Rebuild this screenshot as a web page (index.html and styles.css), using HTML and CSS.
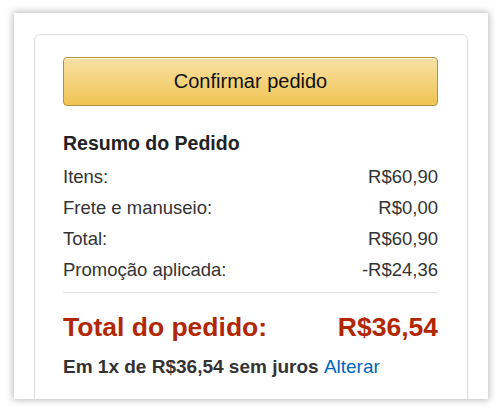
FILE: index.html
```html
<!DOCTYPE html>
<html lang="pt-BR">
<head>
<meta charset="utf-8">
<title>Resumo do Pedido</title>
<link rel="stylesheet" href="styles.css">
</head>
<body>
<div class="frame">
  <div class="card">
    <button class="confirm">Confirmar pedido</button>
    <h3 class="heading">Resumo do Pedido</h3>
    <div class="rows">
      <div class="row"><span>Itens:</span><span>R$60,90</span></div>
      <div class="row"><span>Frete e manuseio:</span><span>R$0,00</span></div>
      <div class="row"><span>Total:</span><span>R$60,90</span></div>
      <div class="row"><span>Promoção aplicada:</span><span>-R$24,36</span></div>
    </div>
    <div class="total"><span>Total do pedido:</span><span>R$36,54</span></div>
    <div class="installments">Em 1x de R$36,54 sem juros <a class="link" href="#">Alterar</a></div>
  </div>
</div>
</body>
</html>
```
FILE: styles.css
```css
html, body {
  margin: 0;
  background: #fff;
}
body {
  padding: 13px 12px 12px 14px;
  font-family: "Liberation Sans", Arial, sans-serif;
}
.frame {
  width: 474px;
  height: 386px;
  background: #fff;
  box-shadow: 0 0 7px 1px rgba(0, 0, 0, 0.28);
  overflow: hidden;
  padding: 21px 20px 0 20px;
  box-sizing: border-box;
}
.card {
  border: 1px solid #dddddd;
  border-radius: 6px;
  height: 400px;
  padding: 22px 29px 0 28px;
  box-sizing: border-box;
}
.confirm {
  display: block;
  width: 100%;
  height: 49px;
  margin: 0;
  padding: 0;
  border: 1px solid #b39343;
  border-radius: 4px;
  background: linear-gradient(to bottom, #f8e1a6, #f0c452);
  box-shadow: inset 0 1px 0 rgba(255, 255, 255, 0.6);
  font-family: "Liberation Sans", Arial, sans-serif;
  font-size: 20px;
  color: #111;
}
.heading {
  margin: 25px 0 0;
  font-size: 19.5px;
  line-height: 24px;
  font-weight: bold;
  color: #222;
}
.rows {
  margin-top: 6px;
  padding-bottom: 7px;
  border-bottom: 1px solid #e3e3e3;
}
.row {
  display: flex;
  justify-content: space-between;
  font-size: 18.5px;
  line-height: 31px;
  color: #333;
}
.total {
  display: flex;
  justify-content: space-between;
  margin-top: 17px;
  font-size: 26.5px;
  line-height: 34px;
  font-weight: bold;
  color: #b12704;
}
.installments {
  margin-top: 11px;
  font-size: 19px;
  line-height: 24px;
  font-weight: bold;
  color: #333;
}
.link {
  font-weight: normal;
  color: #0066c0;
  text-decoration: none;
}
```
